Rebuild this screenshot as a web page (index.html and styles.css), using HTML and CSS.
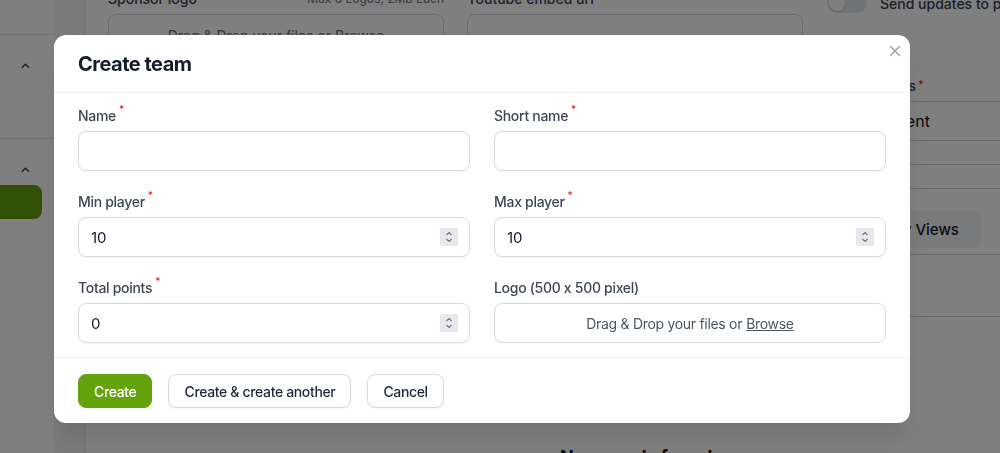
FILE: index.html
```html
<!DOCTYPE html>
<html lang="en">
<head>
<meta charset="utf-8">
<title>Create team</title>
<link rel="stylesheet" href="styles.css">
</head>
<body>
<div class="app">
  <aside class="sidebar">
    <div class="nav-group nav-top"></div>
    <div class="nav-group nav-mid">
      <div class="group-head"><svg class="chev" viewBox="0 0 10 6"><path d="M1 5 L5 1 L9 5" fill="none" stroke="#374151" stroke-width="1.4"/></svg></div>
    </div>
    <div class="nav-group">
      <div class="group-head"><svg class="chev" viewBox="0 0 10 6"><path d="M1 5 L5 1 L9 5" fill="none" stroke="#374151" stroke-width="1.4"/></svg></div>
      <div class="nav-active"></div>
    </div>
  </aside>
  <div class="rail"></div>
  <main class="main">
    <div class="bg-grid">
      <div class="bg-field">
        <div class="bg-label-row"><span>Sponsor logo</span><span class="bg-hint">Max 6 Logos, 2Mb Each</span></div>
        <div class="bg-drop">Drag &amp; Drop your files or Browse</div>
      </div>
      <div class="bg-field">
        <div class="bg-label-row"><span>Youtube embed url</span></div>
        <div class="bg-input"></div>
      </div>
      <div class="bg-side">
        <div class="bg-toggle-row"><span class="bg-toggle"><span class="knob"></span></span><span>Send updates to players</span></div>
        <div class="bg-side-label">Competitions<span class="req">*</span></div>
        <div class="bg-side-input">Tournament</div>
        <div class="bg-lines"><div></div><div></div></div>
        <div class="bg-views"><span class="bg-views-btn">My Views</span></div>
        <div class="bg-line-bottom"></div>
      </div>
    </div>
    <div class="bg-empty">No records found</div>
  </main>
</div>

<div class="overlay">
  <div class="modal">
    <div class="modal-head">
      <h2 class="modal-title">Create team</h2>
      <button class="close" aria-label="Close"><svg viewBox="0 0 12 12"><path d="M1.5 1.5 L10.5 10.5 M10.5 1.5 L1.5 10.5" stroke="#9ca3af" stroke-width="1.5" stroke-linecap="round"/></svg></button>
    </div>
    <div class="modal-body">
      <div class="field">
        <label class="label">Name<sup class="req">*</sup></label>
        <div class="input"></div>
      </div>
      <div class="field">
        <label class="label">Short name<sup class="req">*</sup></label>
        <div class="input"></div>
      </div>
      <div class="field">
        <label class="label">Min player<sup class="req">*</sup></label>
        <div class="input"><span class="value">10</span><span class="spin"><svg viewBox="0 0 10 16"><path d="M2.5 6 L5 3.5 L7.5 6 M2.5 10 L5 12.5 L7.5 10" fill="none" stroke="#6b7280" stroke-width="1.1"/></svg></span></div>
      </div>
      <div class="field">
        <label class="label">Max player<sup class="req">*</sup></label>
        <div class="input"><span class="value">10</span><span class="spin"><svg viewBox="0 0 10 16"><path d="M2.5 6 L5 3.5 L7.5 6 M2.5 10 L5 12.5 L7.5 10" fill="none" stroke="#6b7280" stroke-width="1.1"/></svg></span></div>
      </div>
      <div class="field">
        <label class="label">Total points<sup class="req">*</sup></label>
        <div class="input"><span class="value">0</span><span class="spin"><svg viewBox="0 0 10 16"><path d="M2.5 6 L5 3.5 L7.5 6 M2.5 10 L5 12.5 L7.5 10" fill="none" stroke="#6b7280" stroke-width="1.1"/></svg></span></div>
      </div>
      <div class="field">
        <label class="label">Logo (500 x 500 pixel)</label>
        <div class="drop">Drag &amp; Drop your files or <span class="browse">Browse</span></div>
      </div>
    </div>
    <div class="modal-foot">
      <button class="btn btn-primary">Create</button>
      <button class="btn">Create &amp; create another</button>
      <button class="btn">Cancel</button>
    </div>
  </div>
</div>
</body>
</html>
```

FILE: styles.css
```css
* { box-sizing: border-box; }
html, body { margin: 0; padding: 0; }
body {
  width: 1000px;
  height: 453px;
  overflow: hidden;
  font-family: Inter, "Noto Sans", sans-serif;
  color: #111827;
  background: #ffffff;
}

/* ---------- background page ---------- */
.app {
  display: flex;
  height: 453px;
}
.sidebar {
  width: 54px;
  flex: none;
  background: #ffffff;
  display: flex;
  flex-direction: column;
}
.nav-group { border-bottom: 1px solid #e5e7eb; }
.nav-top { height: 35px; }
.nav-mid { height: 104px; padding-top: 22px; }
.nav-group:last-child { border-bottom: 0; padding-top: 22px; }
.group-head {
  height: 18px;
  display: flex;
  align-items: center;
  padding-left: 21px;
}
.chev { width: 9px; height: 6px; }
.nav-active {
  margin-top: 6px;
  width: 42px;
  height: 34px;
  border-radius: 0 8px 8px 0;
  background: #65a30d;
}
.rail {
  width: 32px;
  flex: none;
  background: #f4f4f5;
  border-right: 1px solid #e5e7eb;
}
.main {
  flex: 1;
  min-width: 0;
  padding-left: 22px;
  font-size: 14px;
  color: #374151;
  display: flex;
  flex-direction: column;
}
.bg-grid {
  margin-top: -12px;
  display: grid;
  grid-template-columns: 336px 336px 200px;
  column-gap: 23px;
}
.bg-label-row {
  display: flex;
  justify-content: space-between;
  height: 20px;
  align-items: center;
  font-weight: 500;
}
.bg-hint { font-size: 12px; color: #6b7280; font-weight: 400; }
.bg-drop {
  margin-top: 6px;
  height: 60px;
  border: 1px solid #d1d5db;
  border-radius: 8px;
  text-align: center;
  padding-top: 12px;
  color: #6b7280;
}
.bg-input {
  margin-top: 6px;
  height: 40px;
  border: 1px solid #d1d5db;
  border-radius: 8px;
}
.bg-side { font-weight: 500; margin-left: 1px; }
.bg-toggle-row {
  display: flex;
  align-items: center;
  gap: 13px;
  height: 30px;
  white-space: nowrap;
}
.bg-toggle {
  flex: none;
  width: 40px;
  height: 20px;
  border-radius: 10px;
  background: #e5e7eb;
  padding: 2px;
  display: flex;
}
.knob { width: 16px; height: 16px; border-radius: 50%; background: #fff; box-shadow: 0 1px 2px rgba(0,0,0,0.15); }
.bg-side-label { margin-top: 59px; height: 20px; }
.req { color: #dc2626; font-size: 11px; vertical-align: top; margin-left: 2px; }
.bg-side-input {
  margin-top: 4px;
  height: 40px;
  border-top: 1px solid #d1d5db;
  border-bottom: 1px solid #d1d5db;
  padding: 9px 0 0 12px;
  font-size: 16px;
  font-weight: 400;
  color: #111827;
}
.bg-lines div { height: 24px; border-bottom: 1px solid #d1d5db; }
.bg-views { padding-top: 22px; padding-bottom: 6px; border-bottom: 1px solid #d1d5db; }
.bg-views-btn {
  display: inline-block;
  margin-left: 40px;
  padding: 9px 22px;
  border-radius: 8px;
  background: #f3f4f6;
  font-size: 15px;
  color: #111827;
}
.bg-line-bottom { height: 62px; border-bottom: 1px solid #d1d5db; }
.bg-empty {
  margin-top: auto;
  margin-bottom: -14px;
  padding-left: 452px;
  font-size: 18px;
  font-weight: 700;
  color: #111827;
}

/* ---------- overlay & modal ---------- */
.overlay {
  position: fixed;
  inset: 0;
  background: rgba(0, 0, 0, 0.5);
  padding: 35px 0 0 54px;
}
.modal {
  width: 856px;
  background: #ffffff;
  border-radius: 12px;
  box-shadow: 0 20px 25px -5px rgba(0,0,0,0.1);
}
.modal-head {
  display: flex;
  align-items: flex-start;
  justify-content: space-between;
  padding: 15px 9px 14px 24px;
  border-bottom: 1px solid #f0f0f2;
}
.modal-title {
  margin: 0;
  font-size: 20px;
  line-height: 28px;
  font-weight: 700;
  letter-spacing: -0.5px;
  color: #161c2d;
}
.close {
  border: 0;
  background: none;
  padding: 0;
  margin-top: -5px;
  width: 12px;
  height: 12px;
  display: flex;
}
.close svg { width: 12px; height: 12px; }
.modal-body {
  display: grid;
  grid-template-columns: 1fr 1fr;
  column-gap: 24px;
  row-gap: 21px;
  padding: 13px 24px 14px;
  border-bottom: 1px solid #f0f0f2;
}
.field { display: flex; flex-direction: column; gap: 5px; }
.label {
  font-size: 14px;
  line-height: 20px;
  font-weight: 500;
  letter-spacing: -0.3px;
  color: #3f4656;
}
.label .req { font-size: 10px; margin-left: 3px; vertical-align: 8px; line-height: 0; }
.input {
  height: 40px;
  border: 1px solid #d8d9e0;
  border-radius: 8px;
  box-shadow: 0 1px 2px rgba(0,0,0,0.04);
  display: flex;
  align-items: center;
  justify-content: space-between;
  padding: 0 11px 0 12px;
}
.value { font-size: 15px; color: #111827; }
.spin {
  width: 18px;
  height: 18px;
  background: #e8e8ec;
  display: flex;
  align-items: center;
  justify-content: center;
}
.spin svg { width: 10px; height: 16px; }
.drop {
  height: 40px;
  border: 1px solid #d8d9e0;
  border-radius: 8px;
  display: flex;
  align-items: center;
  justify-content: center;
  font-size: 14px;
  letter-spacing: -0.3px;
  color: #4b5563;
}
.browse { text-decoration: underline; margin-left: 4px; }
.modal-foot {
  display: flex;
  gap: 16px;
  padding: 16px 24px 15px;
}
.btn {
  height: 34px;
  padding: 0 15px;
  border: 1px solid #d8d9e0;
  border-radius: 8px;
  background: #ffffff;
  font-family: inherit;
  font-size: 14px;
  font-weight: 500;
  letter-spacing: -0.35px;
  color: #1f2937;
  box-shadow: 0 1px 2px rgba(0,0,0,0.04);
}
.btn-primary {
  background: #65a30d;
  border-color: #65a30d;
  color: #ffffff;
}
```
